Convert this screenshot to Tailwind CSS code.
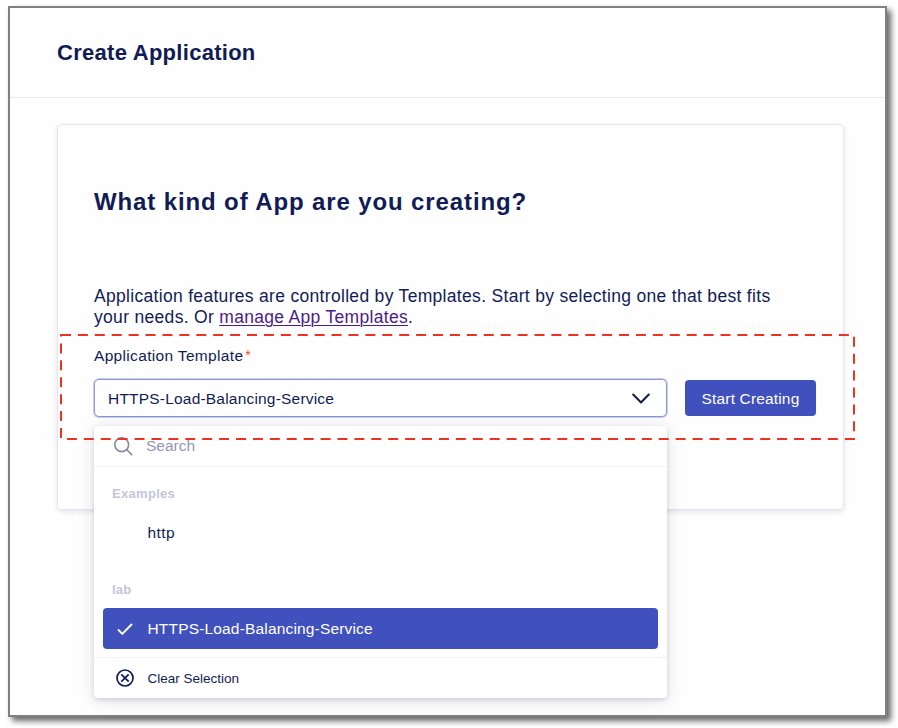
<!DOCTYPE html>
<html lang="en">
<head>
<meta charset="utf-8">
<title>Create Application</title>
<script src="https://cdn.jsdelivr.net/npm/@tailwindcss/browser@4"></script>
</head>
<body class="relative h-[728px] w-[898px] overflow-hidden bg-white pt-[6px] pl-[8px] font-['Liberation_Sans',Arial,sans-serif] text-[#111c55]">
<div class="flex h-[711px] w-[879px] flex-col border-2 border-[#808080] bg-[#fefefe] shadow-[4px_4px_6px_rgba(0,0,0,0.6)]">
  <header class="flex h-[90px] shrink-0 items-center border-b border-[#e7e7f0] px-[47px]">
    <h1 class="text-[22px] leading-7 font-bold tracking-[0.28px]">Create Application</h1>
  </header>
  <main class="px-[47px] pt-[26px]">
    <section class="h-[386px] w-[787px] rounded-[5px] border border-[#e6e6ef] pt-[61px] pl-[35px] shadow-[0_2px_5px_rgba(30,35,90,0.12)]">
      <h2 class="pl-px text-[24px] leading-8 font-bold tracking-[0.88px] whitespace-nowrap">What kind of App are you creating?</h2>
      <p class="mt-[68px] pl-px text-[17.500px] leading-[21px] tracking-[0.31px] whitespace-nowrap">Application features are controlled by Templates. Start by selecting one that best fits<br>your needs. Or <a class="text-[#4b1c87] underline decoration-1 underline-offset-2">manage App Templates</a>.</p>
      <div class="mt-[18px] flex h-5 items-center pl-px text-[15.500px] leading-5 tracking-[0.33px]">Application Template<span class="-mt-[2px] ml-[2px] text-[14px] leading-5 text-[#f04a2a]">*</span></div>
      <div class="mt-[13px] flex h-[38px] gap-[18px] pl-px">
        <div class="relative w-[573px]">
          <div class="flex h-[38px] items-center justify-between rounded-[5px] border border-[#8d97d6] bg-white pt-[2px] pr-[16px] pl-[13px] ring-1 ring-[#c9cfef]">
            <span class="text-[15.500px] tracking-[0.2px]">HTTPS-Load-Balancing-Service</span>
            <svg class="h-[12px] w-[18px]" viewBox="0 0 18 12" fill="none" stroke="#111c55" stroke-width="2" stroke-linecap="round" stroke-linejoin="round"><path d="M1.200 1.500 9 9.500 16.800 1.500"/></svg>
          </div>
          <div class="absolute top-[47px] left-0 flex h-[272px] w-[573px] flex-col rounded-[4px] bg-white shadow-[0_2px_4px_rgba(30,35,90,0.16),0_2px_18px_rgba(30,35,90,0.12)]">
            <div class="flex h-[41px] items-center border-b border-[#f3f3f7] pl-[20px]">
              <svg class="size-[19px]" viewBox="0 0 19 19" fill="none" stroke="#878ba9" stroke-width="1.600" stroke-linecap="round"><circle cx="7.700" cy="7.700" r="6.900"/><path d="m12.800 12.800 4.800 4.800"/></svg>
              <span class="ml-[13px] text-[15.500px] text-[#9396b3]">Search</span>
            </div>
            <div class="mt-[19px] pl-[18px] text-[13px] leading-4 font-bold tracking-[0.3px] text-[#c5c5d8]">Examples</div>
            <div class="mt-[21px] pl-[53.500px] text-[15.500px] leading-5 tracking-[0.4px]">http</div>
            <div class="mt-[39px] pl-[18px] text-[13px] leading-4 font-bold tracking-[0.2px] text-[#c5c5d8]">lab</div>
            <div class="mx-[9px] mt-[10px] flex h-[41px] shrink-0 items-center rounded-[4px] bg-[#4051bd] pl-[14px] text-white">
              <svg class="h-[12px] w-[16px]" viewBox="0 0 16 12" fill="none" stroke="currentColor" stroke-width="1.900"><path d="m1 6.500 4.300 4.300L15 1"/></svg>
              <span class="ml-[14.500px] text-[15.500px] tracking-[0.17px]">HTTPS-Load-Balancing-Service</span>
            </div>
            <div class="mt-[8px] flex grow items-center border-t border-[#f0f0f5] pl-[22px]">
              <svg class="size-[18px]" viewBox="0 0 18 18" fill="none" stroke="#111c55" stroke-width="1.700"><circle cx="9" cy="9" r="8"/><path d="m5.300 5.300 7.400 7.400m0-7.400-7.400 7.400"/></svg>
              <span class="ml-[13.500px] pt-[2px] text-[13.500px]">Clear Selection</span>
            </div>
          </div>
        </div>
        <button class="mt-[1px] h-[36px] w-[131px] rounded-[4px] bg-[#4051bd] pt-[2px] text-[15.500px] tracking-[0.16px] text-white">Start Creating</button>
      </div>
    </section>
  </main>
</div>
<svg class="absolute top-[334px] left-[60px] h-[106px] w-[796px]" viewBox="0 0 796 106" fill="none" stroke="#ec3323" stroke-width="2" stroke-dasharray="10 6.910"><path d="M1 1H794V105H1Z"/></svg>
</body>
</html>
